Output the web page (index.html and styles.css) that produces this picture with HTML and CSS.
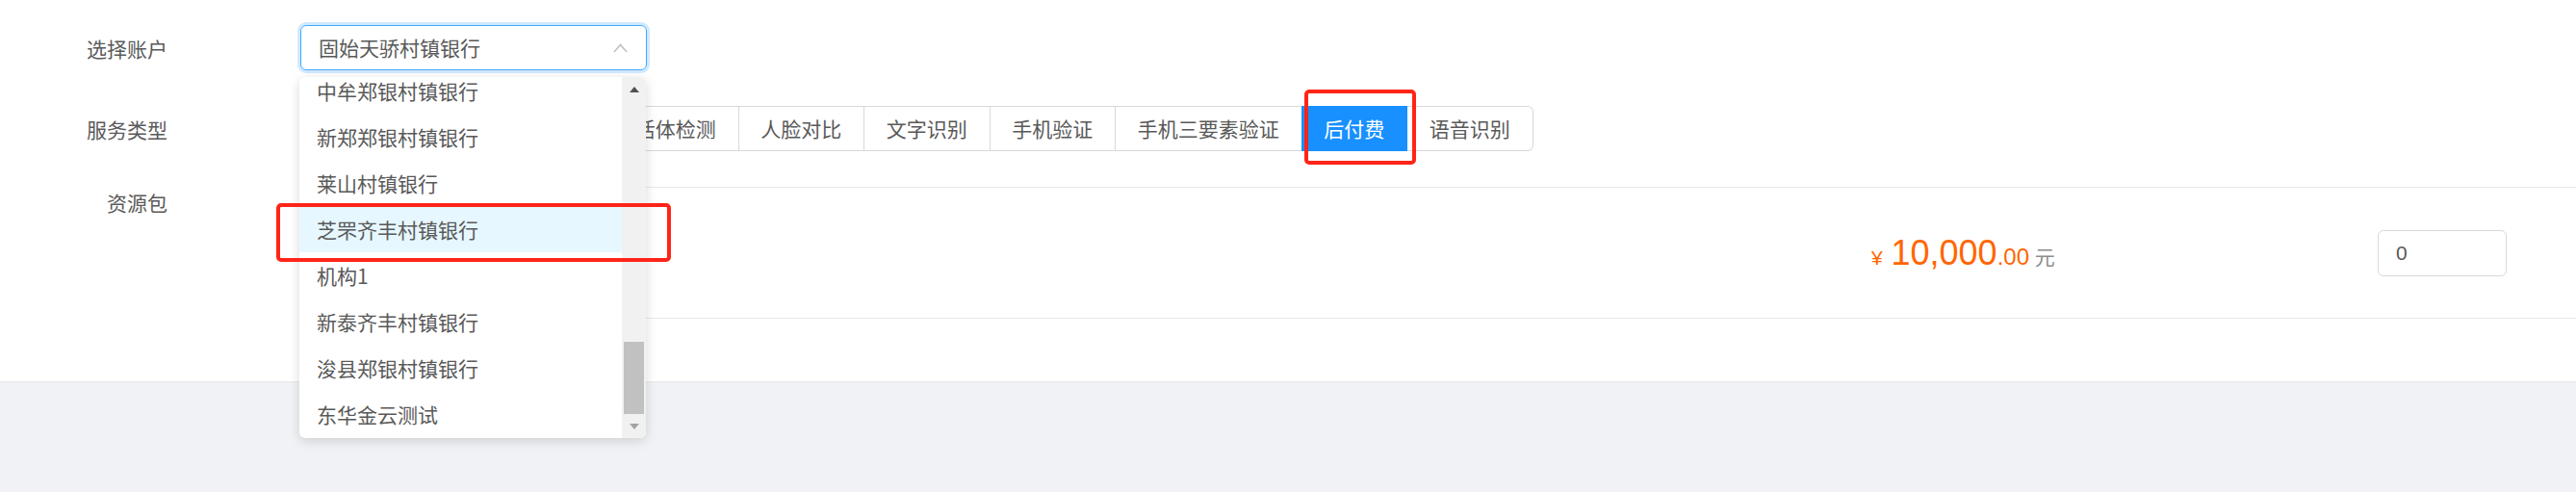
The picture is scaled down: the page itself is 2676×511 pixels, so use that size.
FILE: index.html
```html
<!DOCTYPE html>
<html lang="zh-CN">
<head>
<meta charset="utf-8">
<title>选择账户</title>
<link rel="stylesheet" href="styles.css">
</head>
<body>
<div class="page">
  <div class="panel">
    <div class="form">
      <div class="form-row">
        <div class="label">选择账户</div>
        <div class="control">
          <div class="select">
            <span class="select-value">固始天骄村镇银行</span>
            <svg class="chev" width="15" height="10" viewBox="0 0 15 10"><polyline points="1,9 7.5,1.5 14,9" fill="none" stroke="#bfbfbf" stroke-width="1.5"/></svg>
            <div class="dropdown">
              <div class="dd-list">
                <ul class="dd-items">
                  <li class="dd-item">中牟郑银村镇银行</li>
                  <li class="dd-item">新郑郑银村镇银行</li>
                  <li class="dd-item">莱山村镇银行</li>
                  <li class="dd-item active">芝罘齐丰村镇银行</li>
                  <li class="dd-item">机构1</li>
                  <li class="dd-item">新泰齐丰村镇银行</li>
                  <li class="dd-item">浚县郑银村镇银行</li>
                  <li class="dd-item">东华金云测试</li>
                </ul>
              </div>
              <div class="dd-scroll">
                <div class="sb-btn"><span class="tri-up"></span></div>
                <div class="sb-track"><div class="sb-thumb"></div></div>
                <div class="sb-btn"><span class="tri-down"></span></div>
              </div>
            </div>
          </div>
        </div>
      </div>
      <div class="form-row">
        <div class="label">服务类型</div>
        <div class="control">
          <div class="tabs">
            <div class="tab">身份证识别</div>
            <div class="tab">银行卡四要素</div>
            <div class="tab">活体检测</div>
            <div class="tab">人脸对比</div>
            <div class="tab">文字识别</div>
            <div class="tab">手机验证</div>
            <div class="tab">手机三要素验证</div>
            <div class="tab active">后付费</div>
            <div class="tab">语音识别</div>
          </div>
        </div>
      </div>
      <div class="form-row row-pack">
        <div class="label">资源包</div>
        <div class="control">
          <div class="pack-item">
            <div class="pack-spacer"></div>
            <div class="price"><span class="cur">¥</span> <span class="int">10,000</span><span class="dec">.00</span> <span class="unit">元</span></div>
            <input class="qty" type="text" value="0">
          </div>
        </div>
      </div>
    </div>
  </div>
  <div class="mark mark-item"></div>
  <div class="mark mark-tab"></div>
</div>
</body>
</html>
```

FILE: styles.css
```css
html, body {
  margin: 0;
  padding: 0;
}
body {
  font-family: "Liberation Sans", "Noto Sans CJK SC", sans-serif;
  font-size: 21px;
  color: #595959;
}
.page {
  position: relative;
  width: 2676px;
  height: 511px;
  background: #f0f2f5;
  overflow: hidden;
}
.panel {
  background: #fff;
  padding: 26px 0 65px;
  border-bottom: 1px solid #e8e8e8;
}
.form {
  display: flex;
  flex-direction: column;
  gap: 37px;
}
.form-row {
  display: grid;
  grid-template-columns: 174px 1fr;
  column-gap: 138px;
  align-items: center;
}
.label {
  text-align: right;
  white-space: nowrap;
  color: #5a5a5a;
  font-family: "Noto Sans CJK SC", sans-serif;
}
.row-pack {
  align-items: start;
}
.row-pack .label {
  line-height: 32px;
}

/* select */
.select {
  position: relative;
  width: 360px;
  height: 47px;
  box-sizing: border-box;
  border: 1px solid #40a9ff;
  border-radius: 6px;
  box-shadow: 0 0 0 3px rgba(24, 144, 255, 0.2);
  display: flex;
  align-items: center;
  justify-content: space-between;
  padding: 0 19px 0 18px;
  font-family: "Noto Sans CJK SC", sans-serif;
}
.select-value {
  white-space: nowrap;
  margin-top: -1px;
}
.chev {
  display: block;
}
.dropdown {
  position: absolute;
  left: -2px;
  top: 53px;
  width: 360px;
  height: 375px;
  display: flex;
  background: #fff;
  border-radius: 6px;
  box-shadow: 0 3px 12px rgba(0, 0, 0, 0.15);
  overflow: hidden;
  z-index: 10;
}
.dd-list {
  flex: 1;
  overflow: hidden;
}
.dd-items {
  list-style: none;
  margin: -10px 0 0;
  padding: 0;
}
.dd-item {
  height: 48px;
  line-height: 48px;
  padding: 0 18px;
  white-space: nowrap;
  color: #595959;
}
.dd-item.active {
  background: #e6f7ff;
}
.dd-scroll {
  width: 25px;
  background: #f1f1f1;
  display: flex;
  flex-direction: column;
}
.sb-btn {
  height: 25px;
  display: flex;
  align-items: center;
  justify-content: center;
}
.tri-up {
  width: 0;
  height: 0;
  border-left: 5.5px solid transparent;
  border-right: 5.5px solid transparent;
  border-bottom: 6px solid #505050;
}
.tri-down {
  width: 0;
  height: 0;
  border-left: 5.5px solid transparent;
  border-right: 5.5px solid transparent;
  border-top: 6px solid #a3a3a3;
}
.sb-track {
  flex: 1;
  display: flex;
  flex-direction: column;
  justify-content: flex-end;
}
.sb-thumb {
  height: 75px;
  margin: 0 2px;
  background: #c1c1c1;
}

/* tabs */
.tabs {
  display: flex;
  height: 47px;
  font-family: "Noto Sans CJK SC", sans-serif;
}
.tab {
  box-sizing: border-box;
  height: 47px;
  line-height: 45px;
  padding: 0 22.75px;
  border: 1px solid #d9d9d9;
  border-left-width: 0;
  white-space: nowrap;
  color: #595959;
  background: #fff;
}
.tab:first-child {
  border-left-width: 1px;
  border-radius: 6px 0 0 6px;
}
.tab:last-child {
  border-radius: 0 6px 6px 0;
}
.tab.active {
  background: #1890ff;
  border-color: #1890ff;
  color: #fff;
  box-shadow: -1px 0 0 0 #1890ff;
}

/* pack row */
.pack-item {
  display: flex;
  align-items: center;
  height: 137px;
  box-sizing: border-box;
  border-top: 1px solid #e8e8e8;
  border-bottom: 1px solid #e8e8e8;
  padding-right: 72px;
}
.pack-spacer {
  flex: 1;
}
.price {
  width: 526px;
  color: #ff6600;
  white-space: nowrap;
  font-family: "Liberation Sans", "Noto Sans CJK SC", sans-serif;
}
.cur {
  font-size: 21px;
  margin-right: 3px;
}
.int {
  font-size: 36px;
}
.dec {
  font-size: 24px;
}
.unit {
  font-size: 21px;
  color: #8c8c8c;
  font-family: "Noto Sans CJK SC", sans-serif;
}
.qty {
  width: 134px;
  height: 48px;
  box-sizing: border-box;
  border: 1px solid #d9d9d9;
  border-radius: 6px;
  padding: 0 18px;
  font-family: "Liberation Sans", sans-serif;
  font-size: 21px;
  color: #595959;
  background: #fff;
  outline: none;
}

/* annotation marks */
.mark {
  position: absolute;
  box-sizing: border-box;
  border: 4px solid #ff2418;
  border-radius: 5px;
  z-index: 20;
}
.mark-item {
  left: 287px;
  top: 211px;
  width: 410px;
  height: 61px;
}
.mark-tab {
  left: 1355px;
  top: 93px;
  width: 116px;
  height: 78px;
}
```
